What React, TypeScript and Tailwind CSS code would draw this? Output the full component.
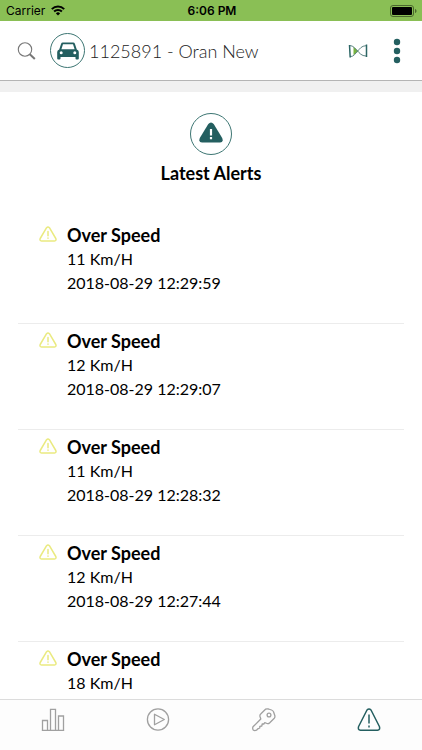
import React from "react";

const alerts = [
  { id: 1, speed: "11 Km/H", time: "2018-08-29 12:29:59" },
  { id: 2, speed: "12 Km/H", time: "2018-08-29 12:29:07" },
  { id: 3, speed: "11 Km/H", time: "2018-08-29 12:28:32" },
  { id: 4, speed: "12 Km/H", time: "2018-08-29 12:27:44" },
  { id: 5, speed: "18 Km/H" },
];

export default function App() {
  return (
    <div className="flex h-screen flex-col overflow-hidden bg-white font-['Lato',sans-serif] text-black">
      <StatusBar />

      {/* HEADER */}
      <header className="flex h-[60px] shrink-0 items-center border-b border-[#b4b4b4] pl-4 pr-3">
        <button aria-label="Search" className="flex w-[34px] shrink-0">
          <SearchIcon />
        </button>
        <div className="flex size-[35px] shrink-0 items-center justify-center rounded-full border border-[#3d7673]">
          <CarIcon />
        </div>
        <h1 className="ml-1 min-w-0 flex-1 truncate text-lg font-light leading-6 text-[#222]">
          1125891 - Oran New
        </h1>
        <button aria-label="Geofence" className="mr-4 flex w-5 shrink-0">
          <GeofenceIcon />
        </button>
        <button aria-label="Menu" className="flex w-[26px] shrink-0 justify-center">
          <DotsIcon />
        </button>
      </header>
      <div className="h-[11px] shrink-0 bg-[#f0f0f0]" />

      {/* ALERT LIST */}
      <main className="mb-2 min-h-0 flex-1 overflow-y-auto [scrollbar-width:none]">
        <div className="flex flex-col items-center pt-[21px]">
          <div className="flex size-[42px] items-center justify-center rounded-full border border-[#3d7673]">
            <SolidAlertIcon />
          </div>
          <h2 className="mt-1.5 text-lg font-bold leading-6">Latest Alerts</h2>
        </div>
        <ul className="mt-[33px] px-[18px]">
          {alerts.map((a) => (
            <AlertRow key={a.id} speed={a.speed} time={a.time} />
          ))}
        </ul>
      </main>

      {/* TABS */}
      <nav className="grid h-[51px] shrink-0 grid-cols-4 border-t border-[#dcdcdc] bg-[#fdfdfd] pt-2">
        <TabButton label="Statistics">
          <StatsIcon />
        </TabButton>
        <TabButton label="Playback">
          <PlayIcon />
        </TabButton>
        <TabButton label="Key">
          <KeyIcon />
        </TabButton>
        <TabButton label="Alerts">
          <AlertTabIcon />
        </TabButton>
      </nav>
    </div>
  );
}

function StatusBar() {
  return (
    <div className="grid h-[21px] shrink-0 grid-cols-3 items-center bg-[#8abf55] pl-1.5 pr-1 font-['Inter',sans-serif] text-xs text-black">
      <div className="flex items-center gap-1.5">
        <span>Carrier</span>
        <svg width="14" height="11" viewBox="0 0 14 11" fill="none" stroke="#000" strokeWidth="2">
          <path d="M.8 4.1a8.8 8.8 0 0 1 12.4 0M3.1 6.5a5.5 5.5 0 0 1 7.8 0" />
          <path d="M7 10.6 4.9 8.4a3 3 0 0 1 4.2 0Z" fill="#000" stroke="none" />
        </svg>
      </div>
      <span className="text-center font-semibold">6:06 PM</span>
      <svg className="justify-self-end" width="28" height="12" viewBox="0 0 28 12">
        <rect x=".5" y=".5" width="23" height="11" rx="2.5" fill="none" stroke="#4b682e" />
        <rect x="2" y="2" width="20" height="8" rx="1" />
        <path d="M25 4c2 .5 2 3.5 0 4Z" fill="#4b682e" />
      </svg>
    </div>
  );
}

function AlertRow({ speed, time }: { speed: string; time?: string }) {
  return (
    <li className="flex h-[106px] border-b border-[#ececec] pl-[21px] pt-[5px] leading-6 last:border-b-0">
      <svg className="mt-[3px] shrink-0" width="18" height="16" viewBox="0 0 18 16" fill="none" stroke="#eaea80" strokeWidth="1.5" strokeLinecap="round" strokeLinejoin="round">
        <path d="M7.6 1.7Q9 .2 10.4 1.7L16.8 12.5Q17.6 14.8 15.5 15H2.5Q.4 14.8 1.2 12.5Z" />
        <path d="M9 5.5v4.2M9 12v.3" />
      </svg>
      <div className="ml-2.5">
        <h3 className="text-lg font-bold leading-6">Over Speed</h3>
        <p>{speed}</p>
        {time && <p>{time}</p>}
      </div>
    </li>
  );
}

function TabButton({ label, children }: { label: string; children: React.ReactNode }) {
  return (
    <button aria-label={label} className="flex items-start justify-center">
      {children}
    </button>
  );
}

function SearchIcon() {
  return (
    <svg width="20" height="20" viewBox="0 0 20 20" fill="none" stroke="#777">
      <circle cx="9" cy="8.5" r="6.7" strokeWidth="1.1" />
      <path d="m13.8 13.3 5 4.7" strokeWidth="2" />
    </svg>
  );
}

function CarIcon() {
  return (
    <svg width="22" height="18" viewBox="0 0 22 18" fill="#245f60">
      <path
        fillRule="evenodd"
        d="M5.8.5h10.4q1.3 0 1.7 1.3L19.8 7.5q2 .6 2 2.500v6.500q0 1-1 1h-1.300q-1 0-1-1V15h-15v1.500q0 1-1 1H1.200q-1 0-1-1V10q0-1.900 2-2.500L4.100 1.800Q4.500.5 5.800.5ZM6 2.300 4.400 7.300h13.200L16 2.300ZM4.200 9.200a1.500 1.500 0 1 0 0 3 1.500 1.500 0 0 0 0-3Zm13.600 0a1.500 1.500 0 1 0 0 3 1.500 1.500 0 0 0 0-3Z"
      />
    </svg>
  );
}

function GeofenceIcon() {
  return (
    <svg width="20" height="14" viewBox="0 0 20 14" fill="none">
      <path d="M5.500 2.800 10.600 7.200 5.500 11Z" fill="#78b43f" />
      <path d="M1.500 1.500c4 0 6 3.500 8 5.500s4 5 8.500 5M2 12.700c4 0 5.500-3.500 7.500-5.500s4-5.500 8.500-5.500" stroke="#5d8584" />
      <path d="m1.500 1 .7 12.500M18.500 .5v12.500" stroke="#2c6665" strokeWidth="1.5" />
    </svg>
  );
}

function DotsIcon() {
  return (
    <svg width="8" height="26" viewBox="0 0 8 26" fill="#245f60">
      <circle cx="4" cy="4" r="3.2" />
      <circle cx="4" cy="13" r="3.2" />
      <circle cx="4" cy="22" r="3.2" />
    </svg>
  );
}

function SolidAlertIcon() {
  return (
    <svg className="-mt-1" width="24" height="21" viewBox="0 0 24 21">
      <path d="M9.3 2Q12-1.2 14.7 2L23.2 16Q24.8 20.2 21 20.5H3Q-.8 20.2.8 16Z" fill="#245f60" />
      <path d="M10.9 7h2.2v6.5h-2.2ZM10.9 15h2.2v2.2h-2.2Z" fill="#fff" />
    </svg>
  );
}

function StatsIcon() {
  return (
    <svg width="24" height="24" viewBox="0 0 24 24" fill="none" stroke="#a0a0a0" strokeWidth="1.3">
      <path d="M1.5 22.3V12.5h5v9.8M9.5 22.3V1.3h5v21M17.5 22.3V8h5v14.3M.8 22.3h22.4" />
    </svg>
  );
}

function PlayIcon() {
  return (
    <svg width="24" height="24" viewBox="0 0 24 24" fill="none" stroke="#a0a0a0" strokeWidth="1.3" strokeLinejoin="round">
      <circle cx="12" cy="11.5" r="10.6" />
      <path d="M8.5 6.2v10.6l9.8-5.3Z" />
    </svg>
  );
}

function KeyIcon() {
  return (
    <svg width="24" height="24" viewBox="0 0 24 24" fill="none" stroke="#a0a0a0" strokeWidth="1.3" strokeLinejoin="round">
      <path d="M13.5 1.2Q15 .6 16.5 1L19.5 2Q21 2.5 21.6 4L22.8 7.500Q23.200 9 22.300 10.200L17.500 15Q16.400 16 15 15.500L12.800 14.700 11.800 16H10.200L9.800 18 7.800 18.300V20L5.800 20.800 4.500 22.200Q2.500 23 1.200 22 .3 20.500 1 18.800L8.800 11 8 8.500Q7.600 7 8.700 6Z" />
      <circle cx="17" cy="7" r="1.9" />
    </svg>
  );
}

function AlertTabIcon() {
  return (
    <svg width="24" height="24" viewBox="0 0 24 24" fill="none" stroke="#245f60" strokeWidth="1.5" strokeLinejoin="round">
      <path d="M10 2Q12-.2 14 2L22.4 18.5Q23.5 22 20.5 22.3H3.5Q.5 22 1.6 18.5Z" />
      <path d="M12 6.5v9M12 17.5v2" />
    </svg>
  );
}
